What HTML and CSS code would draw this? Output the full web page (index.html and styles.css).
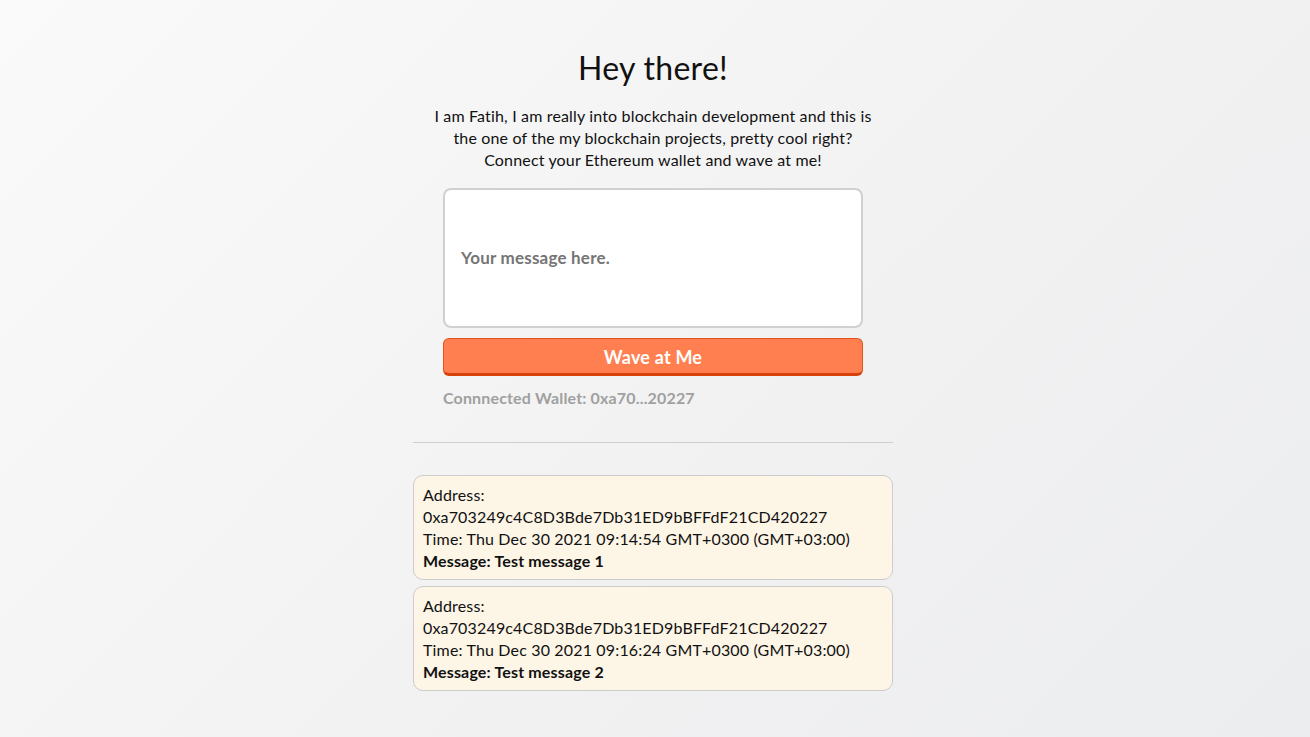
FILE: index.html
```html
<!DOCTYPE html>
<html>
<head>
<meta charset="utf-8">
<link rel="stylesheet" href="styles.css">
</head>
<body>
<main class="page">
  <div class="container">
    <h1 class="title">Hey there!</h1>
    <p class="intro">I am Fatih, I am really into blockchain development and this is<br>the one of the my blockchain projects, pretty cool right?<br>Connect your Ethereum wallet and wave at me!</p>
    <div class="form">
      <textarea class="message-input" placeholder="Your message here."></textarea>
      <button class="wave-btn">Wave at Me</button>
      <div class="wallet">Connnected Wallet: 0xa70...20227</div>
    </div>
    <hr class="divider">
    <div class="waves">
      <div class="wave-card">
        <div>Address: 0xa703249c4C8D3Bde7Db31ED9bBFFdF21CD420227</div>
        <div>Time: Thu Dec 30 2021 09:14:54 GMT+0300 (GMT+03:00)</div>
        <div class="msg">Message: Test message 1</div>
      </div>
      <div class="wave-card">
        <div>Address: 0xa703249c4C8D3Bde7Db31ED9bBFFdF21CD420227</div>
        <div>Time: Thu Dec 30 2021 09:16:24 GMT+0300 (GMT+03:00)</div>
        <div class="msg">Message: Test message 2</div>
      </div>
    </div>
  </div>
</main>
</body>
</html>
```
FILE: styles.css
```css
* { box-sizing: border-box; }
html, body { margin: 0; padding: 0; height: 100%; }
body {
  font-family: "Lato", "Noto Sans", sans-serif;
  color: #111;
  background: linear-gradient(135deg, #fafafa 0%, #f1f1f2 60%, #ecedef 100%);
}
.page {
  min-height: 737px;
  display: flex;
  justify-content: center;
  padding-right: 4px;
}
.container {
  width: 480px;
  display: flex;
  flex-direction: column;
  align-items: center;
  padding-top: 48px;
  letter-spacing: 0.16px;
}
.title {
  margin: 0;
  font-size: 32px;
  font-weight: 400;
  line-height: 40px;
  letter-spacing: 0.3px;
}
.intro {
  margin: 17px 0 0;
  font-size: 16px;
  line-height: 22px;
  text-align: center;
}
.form {
  width: 420px;
  margin-top: 17px;
  display: flex;
  flex-direction: column;
}
.message-input {
  width: 420px;
  height: 140px;
  border: 2px solid #d0d0d0;
  border-radius: 8px;
  background: #fff;
  padding: 57px 16px 0;
  font-family: inherit;
  font-size: 17px;
  font-weight: 700;
  letter-spacing: 0.2px;
  resize: none;
  outline: none;
}
.message-input::placeholder { color: #757575; }
.wave-btn {
  margin-top: 10px;
  height: 38px;
  border: 1px solid #e0541f;
  border-bottom: 3px solid #d9410c;
  border-radius: 6px;
  background: #ff7f50;
  color: #fff;
  font-family: inherit;
  font-size: 18px;
  font-weight: 700;
  letter-spacing: 0.2px;
  padding: 2px 0 0;
}
.wallet {
  margin-top: 11px;
  color: #a0a0a0;
  font-size: 16px;
  font-weight: 700;
  line-height: 22px;
}
.divider {
  width: 480px;
  margin: 33px 0 0;
  border: 0;
  border-top: 1px solid #cfcfcf;
}
.waves {
  width: 480px;
  margin-top: 32px;
  display: flex;
  flex-direction: column;
  gap: 6px;
}
.wave-card {
  background: #fdf5e6;
  border: 1px solid #cccccc;
  border-radius: 10px;
  padding: 8px 9px 7px;
  font-size: 16px;
  line-height: 22px;
}
.msg { font-weight: 700; }
```
